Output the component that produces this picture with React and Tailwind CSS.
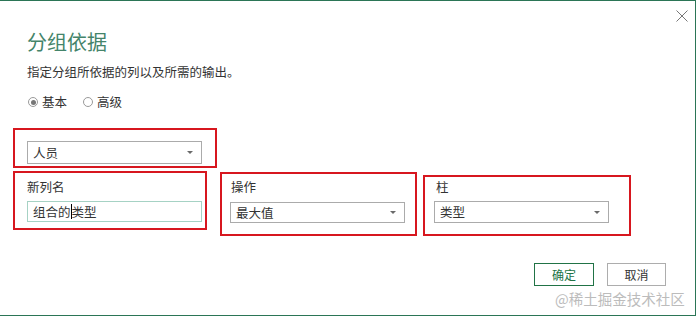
import React from "react";

const FONT = { fontFamily: '"Microsoft YaHei","Noto Sans CJK SC","Noto Sans",sans-serif' };

function Arrow() {
  return (
    <svg width="6" height="3" viewBox="0 0 6 3" className="shrink-0">
      <path d="M0 0H6L3 3Z" fill="#6a6a6a" />
    </svg>
  );
}

function Select({ value, h = "h-[23px]" }) {
  return (
    <div className={`w-[175px] ${h} border border-[#ababab] bg-white flex items-center justify-between pl-[5px] pr-[8px] text-[12.5px] leading-[16px] text-[#333]`}>
      <span>{value}</span>
      <Arrow />
    </div>
  );
}

function Radio({ checked, label }) {
  return (
    <div className="flex items-center gap-[4px]">
      <span className="w-[10px] h-[10px] rounded-full border border-[#9a9a9a] bg-white flex items-center justify-center">
        {checked && <span className="w-[5px] h-[5px] rounded-full bg-[#777]" />}
      </span>
      <span className="text-[12.5px] leading-[16px] text-[#333]">{label}</span>
    </div>
  );
}

export default function App() {
  return (
    <div className="w-[698px] h-[317px] bg-white" style={FONT}>
      <div className="relative w-[696px] h-[316px] bg-white border-t border-r border-b border-[#2b7556]">
        {/* close */}
        <button className="absolute left-[675px] top-[8px] w-[13px] h-[13px] flex items-center justify-center">
          <svg width="12" height="12" viewBox="0 0 12 12">
            <path d="M0.5 0.5L11.5 11.5M11.5 0.5L0.5 11.5" stroke="#777" strokeWidth="1" />
          </svg>
        </button>

        <div className="pl-[27px]">
          <div className="mt-[29px] h-[24px] text-[20px] leading-[24px] text-[#44846a]">分组依据</div>
          <div className="mt-[10px] h-[16px] text-[12.5px] leading-[16px] text-[#333]">
            指定分组所依据的列以及所需的输出。
          </div>
          <div className="mt-[14px] h-[16px] flex items-center gap-[16px] pl-[1px]">
            <Radio checked label="基本" />
            <Radio label="高级" />
          </div>
        </div>

        <div className="pl-[13px]">
          <div className="mt-[18px] w-[204px] h-[40px] border-2 border-[#d7171f] pl-[12px] pt-[11px]">
            <Select value="人员" />
          </div>

          <div className="mt-[3px] flex items-start">
            <div className="w-[194px] h-[59px] border-2 border-[#d7171f] pl-[12px] pt-[6px]">
              <div className="h-[16px] text-[12.5px] leading-[16px] text-[#333]">新列名</div>
              <div className="mt-[6px] w-[175px] h-[21px] border border-[#a6d2c4] bg-white flex items-center pl-[5px] text-[12.5px] leading-[16px] text-[#333]">
                <span>组合的</span>
                <span className="inline-block w-[1px] h-[15px] bg-black" />
                <span>类型</span>
              </div>
            </div>

            <div className="ml-[13px] mt-[1px] w-[197px] h-[64px] border-2 border-[#d7171f] pl-[8px] pt-[5px]">
              <div className="ml-[1px] h-[16px] text-[12.5px] leading-[16px] text-[#333]">操作</div>
              <div className="mt-[7px]">
                <Select value="最大值" h="h-[21px]" />
              </div>
            </div>

            <div className="ml-[6px] mt-[4px] w-[208px] h-[61px] border-2 border-[#d7171f] pl-[9px] pt-[2px]">
              <div className="ml-[2px] h-[16px] text-[12.5px] leading-[16px] text-[#333]">柱</div>
              <div className="mt-[6px]">
                <Select value="类型" h="h-[22px]" />
              </div>
            </div>
          </div>
        </div>

        <div className="mt-[27px] flex justify-end pr-[29px] gap-[13px]">
          <button className="w-[60px] h-[23px] border border-[#217346] bg-white text-[12px] leading-[16px] text-[#217346]">
            确定
          </button>
          <button className="w-[59px] h-[23px] border border-[#adadad] bg-white text-[12px] leading-[16px] text-[#333]">
            取消
          </button>
        </div>

        <div className="absolute left-[555px] top-[289px] text-[14.5px] leading-[18px] text-[#bcbcbc] whitespace-nowrap">
          @稀土掘金技术社区
        </div>
      </div>
    </div>
  );
}
